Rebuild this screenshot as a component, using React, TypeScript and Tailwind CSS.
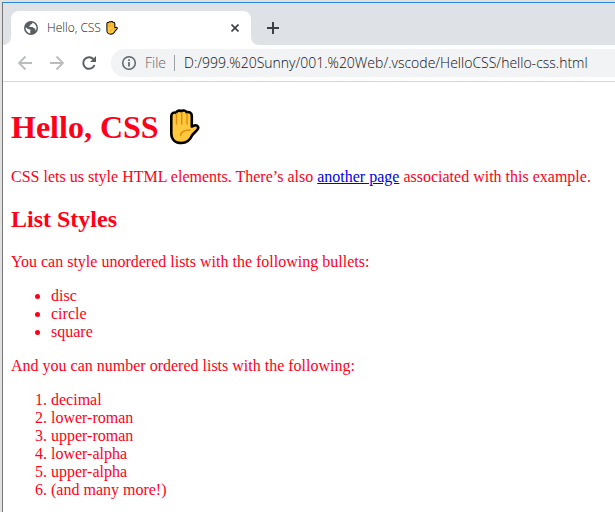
import React from "react";

function Globe() {
  return (
    <svg className="size-4 shrink-0" viewBox="0 0 16 16" aria-hidden="true">
      <circle cx="8" cy="8" r="7" fill="#5a5e63" />
      <path d="M2.6 7.2 5 8.9c.7.5 1.8.1 2.4.9.5.8-.4 1.3-.2 2.2l.2 1.5A5.6 5.6 0 0 1 2.6 7.2Z" fill="#fff" />
      <path d="M9.3 2.5c.5 1.2-.8 1.5-1.6 1.9-.8.3-.2 1.2-1.1 1.5-.7.2-.6 1 .1 1.1h2.7c.8.1.8 1.3 1.7 1.3.8 0 1.3.3 1.2 1.2-.1.6.1 1 .5 1.1A5.6 5.6 0 0 0 9.3 2.5Z" fill="#fff" />
    </svg>
  );
}

function Hand({ className }: { className: string }) {
  return (
    <svg className={className} viewBox="0 0 31 36" role="img" aria-label="Raised hand">
      <path
        d="M2.300 7C2.300 3.800 5.400 3 7 4 7.400 1.600 10.800 1 12.200 2.300 13.400 .900 17 1.200 17.600 3.300 20.200 2.500 22.800 3.900 22.800 6.800V17.600L25.200 16.600C28.600 15.400 30.400 18.600 28.200 20.800L23.300 26C21 31.300 17.400 34 12.500 34 6.300 34 2.300 30.300 2.300 24.500Z"
        fill="#ffc83d"
        stroke="#000"
        strokeWidth="2.600"
        strokeLinejoin="round"
      />
      <path d="M7.500 4.500V15M12.700 3.500V15M18 4.500V15M11.500 26.500C11.800 22.500 14.500 21 21 21" fill="none" stroke="#dc8d10" strokeWidth="1.400" strokeLinecap="round" />
    </svg>
  );
}

function BrowserTabs() {
  return (
    <div className="flex h-[42px] bg-[#dee1e6] pt-2">
      <div className="flex w-2 items-end bg-white">
        <div className="h-full w-2 rounded-br-lg bg-[#dee1e6]" />
      </div>
      <div className="bg-white">
        <div className="bg-[#dee1e6]">
          <div className="flex h-[34px] w-60 items-center rounded-t-lg bg-white pl-3 pr-2">
            <Globe />
            <span className="ml-2 text-xs font-light text-[#202124]">Hello, CSS</span>
            <Hand className="ml-[5px] h-[14px] w-3" />
            <button type="button" aria-label="Close tab" className="ml-auto flex size-4 items-center justify-center">
              <svg className="size-2" viewBox="0 0 8 8" fill="none" stroke="#3c4043" strokeWidth="1.600">
                <path d="m.5.5 7 7m0-7-7 7" />
              </svg>
            </button>
          </div>
        </div>
      </div>
      <div className="flex-1 bg-white">
        <div className="flex h-full items-center rounded-bl-lg bg-[#dee1e6] pl-[14px]">
          <button type="button" aria-label="New tab" className="flex size-4 items-center justify-center">
            <svg className="size-3" viewBox="0 0 12 12" fill="none" stroke="#3c4043" strokeWidth="2">
              <path d="M6 0v12M0 6h12" />
            </svg>
          </button>
        </div>
      </div>
    </div>
  );
}

function Toolbar() {
  return (
    <div className="flex h-[37px] items-center border-b border-[#d5d7da] bg-white pl-[14px]">
      <div className="flex gap-4">
        <button type="button" aria-label="Back" className="size-4">
          <svg className="size-4" viewBox="0 0 16 16" fill="none" stroke="#babcbe" strokeWidth="1.800">
            <path d="M15 8H2M8.500 1.500 2 8l6.500 6.500" />
          </svg>
        </button>
        <button type="button" aria-label="Forward" className="size-4">
          <svg className="size-4" viewBox="0 0 16 16" fill="none" stroke="#babcbe" strokeWidth="1.800">
            <path d="M1 8h13M7.500 1.500 14 8l-6.500 6.500" />
          </svg>
        </button>
        <button type="button" aria-label="Reload" className="size-4">
          <svg className="size-4" viewBox="0 0 16 16">
            <path d="M13.500 10A5.800 5.800 0 1 1 12.300 4" fill="none" stroke="#5a5e63" strokeWidth="2" />
            <path d="M15 1v6H9Z" fill="#5a5e63" />
          </svg>
        </button>
      </div>
      <label className="ml-[14px] flex h-7 flex-1 items-center rounded-l-full bg-[#f1f3f4] pl-[10px] text-sm text-[#5f6368]">
        <svg className="size-4 shrink-0" viewBox="0 0 16 16" fill="none" stroke="#5f6368" aria-hidden="true">
          <circle cx="8" cy="8" r="6.300" strokeWidth="1.500" />
          <path d="M8 7v4.500M8 4.300v1.600" strokeWidth="1.700" />
        </svg>
        <span className="ml-2 font-light">File</span>
        <span className="ml-2 h-4 w-px bg-[#9da1a5]" />
        <input
          aria-label="Address"
          className="ml-[9px] min-w-0 flex-1 bg-transparent text-sm font-light text-[#101114] outline-none"
          defaultValue="D:/999.%20Sunny/001.%20Web/.vscode/HelloCSS/hello-css.html"
        />
      </label>
    </div>
  );
}

export default function App() {
  return (
    <div className="flex min-h-screen bg-[#e0e0e0] pt-[2px] font-['Open_Sans','Noto_Sans',sans-serif]">
      <div className="w-[2px] shrink-0" />
      <div className="min-w-0 flex-1 border-l border-t border-l-[#777777] border-t-[#2b88d8] bg-white">
        <BrowserTabs />
        <Toolbar />
        <main className="px-2 pt-[26px] font-['Liberation_Serif',serif] text-base leading-[18px] text-[#ff0019]">
          <h1 className="mb-[22px] flex h-[38px] items-center text-[32px] leading-9 font-bold">
            Hello, CSS
            <Hand className="ml-[10px] h-9 w-[31px]" />
          </h1>
          <p>
            CSS lets us style HTML elements. There’s also{" "}
            <a href="#another-page" className="text-[#0000ee] underline">another page</a> associated with this example.
          </p>
          <h2 className="my-5 text-2xl leading-[27px] font-bold">List Styles</h2>
          <p>You can style unordered lists with the following bullets:</p>
          <ul className="my-4 list-disc pl-10">
            <li>disc</li>
            <li>circle</li>
            <li>square</li>
          </ul>
          <p>And you can number ordered lists with the following:</p>
          <ol className="mt-4 list-decimal pl-10">
            <li>decimal</li>
            <li>lower-roman</li>
            <li>upper-roman</li>
            <li>lower-alpha</li>
            <li>upper-alpha</li>
            <li>(and many more!)</li>
          </ol>
        </main>
      </div>
    </div>
  );
}
